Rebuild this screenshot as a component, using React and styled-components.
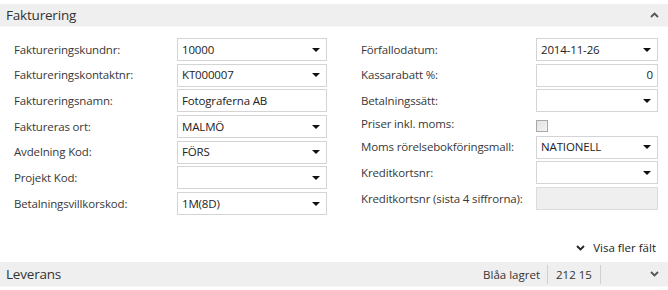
import React from "react";
import styled, { createGlobalStyle } from "styled-components";

const Global = createGlobalStyle`
  html, body { margin: 0; padding: 0; background: #ffffff; }
  body { font-family: "Open Sans", "Noto Sans", sans-serif; color: #333; }
  * { box-sizing: border-box; }
`;

const Page = styled.div`
  width: 668px;
  height: 290px;
  padding-top: 4px;
  display: flex;
  flex-direction: column;
  overflow: hidden;
`;

const SectionBar = styled.div`
  height: ${(p) => p.$h}px;
  flex: 0 0 auto;
  background: #efefef;
  display: flex;
  align-items: center;
  padding: 0 0 0 6px;
  font-size: 13.5px;
  color: #333;
  border-bottom: 1px solid #f7f7f7;
`;

const BarTitle = styled.div`
  flex: 1;
  letter-spacing: -0.2px;
`;

const BarIcon = styled.div`
  width: 28px;
  display: flex;
  justify-content: center;
`;

const Form = styled.div`
  display: grid;
  grid-template-columns: 313px 297px;
  column-gap: 34px;
  padding: 11px 0 0 14px;
  align-items: start;
`;

const Column = styled.div`
  display: grid;
  grid-template-columns: ${(p) => p.$cols};
  row-gap: 2.7px;
`;

const Label = styled.div`
  font-size: 11.5px;
  line-height: 14px;
  color: #383838;
  display: flex;
  align-items: center;
  height: ${(p) => p.$h || 23}px;
  white-space: nowrap;
  letter-spacing: -0.15px;
`;

const Field = styled.div`
  height: 23px;
  border: 1px solid ${(p) => (p.$disabled ? "#dcdcdc" : "#d4d4d4")};
  background: ${(p) => (p.$disabled ? "#efefef" : "#fff")};
  display: flex;
  align-items: center;
  padding: 0 4px 0 4px;
  font-size: 11.5px;
  line-height: 14px;
  color: #222;
  justify-content: ${(p) => (p.$right ? "flex-end" : "flex-start")};
  letter-spacing: -0.15px;
`;

const Value = styled.span`
  flex: ${(p) => (p.$right ? "0 0 auto" : "1")};
`;

const Arrow = styled.span`
  width: 0;
  height: 0;
  border-left: 4px solid transparent;
  border-right: 4px solid transparent;
  border-top: 4px solid #111;
  margin-right: 2px;
`;

const CheckCell = styled.div`
  height: 18px;
  display: flex;
  align-items: center;
  padding-top: 3px;
`;

const Check = styled.div`
  width: 12px;
  height: 12px;
  border: 1px solid #a9a9a9;
  background: linear-gradient(135deg, #e2e2e2, #f4f4f4);
`;

const MoreRow = styled.div`
  display: flex;
  flex: 0 0 auto;
  justify-content: flex-end;
  align-items: center;
  gap: 8px;
  padding: 18px 12px 0 0;
  height: 47px;
  font-size: 11.5px;
  color: #222;
`;

const StatusItem = styled.div`
  font-size: 11.5px;
  color: #333;
  padding: 0 ${(p) => p.$pr ?? 7}px 0 ${(p) => p.$pl ?? 0}px;
  height: 19px;
  display: flex;
  align-items: center;
  justify-content: ${(p) => (p.$end ? "flex-end" : "flex-start")};
  border-right: ${(p) => (p.$sep ? "1px solid #d0d0d0" : "none")};
  width: ${(p) => (p.$w ? p.$w + "px" : "auto")};
`;

const Chevron = ({ up, color = "#222", w = 9 }) => (
  <svg width={w} height="6" viewBox="0 0 9 6">
    <polyline
      points={up ? "1,5 4.5,1.5 8,5" : "1,1 4.5,4.5 8,1"}
      fill="none"
      stroke={color}
      strokeWidth="1.8"
    />
  </svg>
);

const Input = ({ value = "", dropdown, right, disabled }) => (
  <Field $right={right} $disabled={disabled}>
    <Value $right={right}>{value}</Value>
    {dropdown && <Arrow />}
  </Field>
);

const left = [
  ["Faktureringskundnr:", "10000", true],
  ["Faktureringskontaktnr:", "KT000007", true],
  ["Faktureringsnamn:", "Fotograferna AB", false],
  ["Faktureras ort:", "MALMÖ", true],
  ["Avdelning Kod:", "FÖRS", true],
  ["Projekt Kod:", "", true],
  ["Betalningsvillkorskod:", "1M(8D)", true],
];

export default function App() {
  return (
    <>
      <Global />
      <Page>
        <SectionBar $h={23}>
          <BarTitle>Fakturering</BarTitle>
          <BarIcon>
            <Chevron up color="#555" w={9} />
          </BarIcon>
        </SectionBar>
        <Form>
          <Column $cols="163px 150px">
            {left.map(([l, v, d]) => (
              <React.Fragment key={l}>
                <Label>{l}</Label>
                <Input value={v} dropdown={d} />
              </React.Fragment>
            ))}
          </Column>
          <Column $cols="175px 122px">
            <Label>Förfallodatum:</Label>
            <Input value="2014-11-26" dropdown />
            <Label>Kassarabatt %:</Label>
            <Input value="0" right />
            <Label>Betalningssätt:</Label>
            <Input dropdown />
            <Label $h={18}>Priser inkl. moms:</Label>
            <CheckCell>
              <Check />
            </CheckCell>
            <Label>Moms rörelsebokföringsmall:</Label>
            <Input value="NATIONELL" dropdown />
            <Label>Kreditkortsnr:</Label>
            <Input dropdown />
            <Label>Kreditkortsnr (sista 4 siffrorna):</Label>
            <Input disabled />
          </Column>
        </Form>
        <MoreRow>
          <Chevron />
          <span>Visa fler fält</span>
        </MoreRow>
        <SectionBar $h={25}>
          <BarTitle>Leverans</BarTitle>
          <StatusItem $sep $pr={7}>Blåa lagret</StatusItem>
          <StatusItem $sep $pl={8} $w={53}>212 15</StatusItem>
          <StatusItem $end $w={67} $pr={9}>
            <Chevron color="#555" />
          </StatusItem>
        </SectionBar>
      </Page>
    </>
  );
}
